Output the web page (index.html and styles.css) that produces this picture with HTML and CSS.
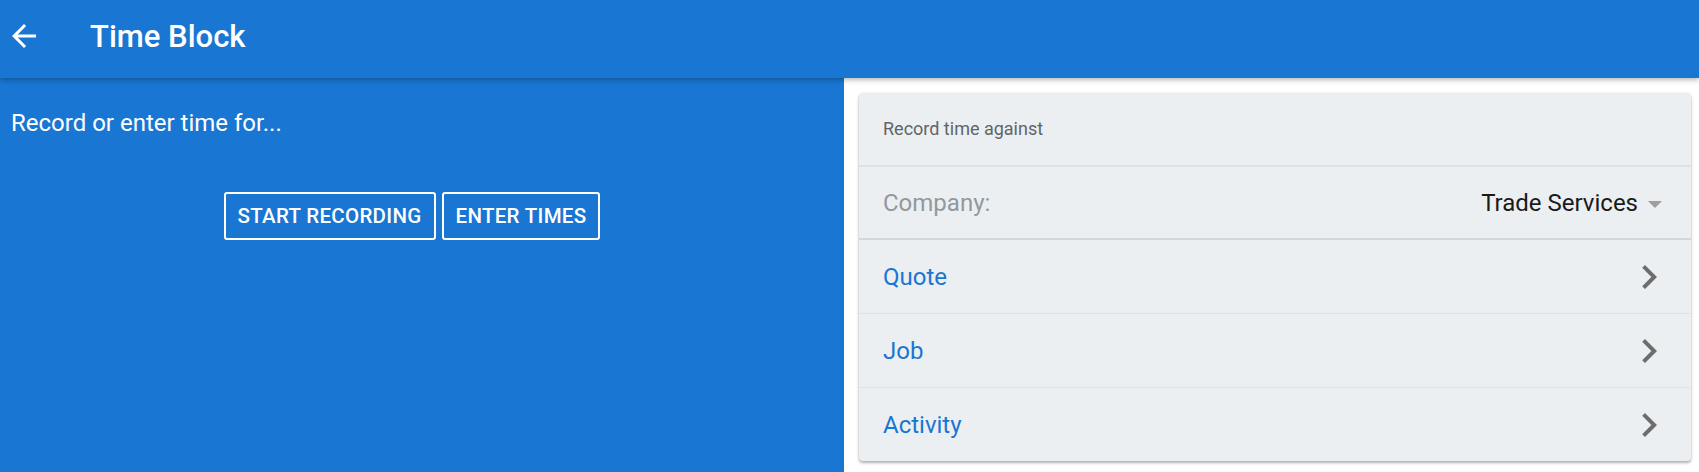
FILE: index.html
```html
<!DOCTYPE html>
<html lang="en">
<head>
  <meta charset="UTF-8" />
  <meta name="viewport" content="width=device-width, initial-scale=1.0"/>
  <title>Time Block</title>
  <link rel="stylesheet" href="styles.css">
</head>
<body>

  <header class="app-bar">
    <button class="back-btn" aria-label="Back">
      <svg viewBox="0 0 24 24" width="36" height="36"><path d="M20 11H7.83l5.59-5.59L12 4l-8 8 8 8 1.41-1.41L7.83 13H20v-2z" fill="#fff"/></svg>
    </button>
    <h1 class="title">Time Block</h1>
  </header>

  <main class="layout">
    <section class="left-panel">
      <p class="intro">Record or enter time for...</p>
      <div class="actions">
        <button class="outline-btn">Start Recording</button>
        <button class="outline-btn">Enter Times</button>
      </div>
    </section>

    <section class="right-panel">
      <div class="card">
        <div class="card-head">Record time against</div>

        <div class="row company-row">
          <span class="label">Company:</span>
          <span class="select">
            Trade Services
            <span class="caret"></span>
          </span>
        </div>

        <div class="row link-row">
          <span class="link">Quote</span>
          <svg class="chevron" viewBox="0 0 24 24" width="48" height="48"><path d="M10 6L8.59 7.41 13.17 12l-4.58 4.59L10 18l6-6z"/></svg>
        </div>
        <div class="row link-row">
          <span class="link">Job</span>
          <svg class="chevron" viewBox="0 0 24 24" width="48" height="48"><path d="M10 6L8.59 7.41 13.17 12l-4.58 4.59L10 18l6-6z"/></svg>
        </div>
        <div class="row link-row last">
          <span class="link">Activity</span>
          <svg class="chevron" viewBox="0 0 24 24" width="48" height="48"><path d="M10 6L8.59 7.41 13.17 12l-4.58 4.59L10 18l6-6z"/></svg>
        </div>
      </div>
    </section>
  </main>

</body>
</html>
```

FILE: styles.css
```css
* {
  margin: 0;
  padding: 0;
  box-sizing: border-box;
  font-family: Roboto, 'Liberation Sans', sans-serif;
}

html, body {
  height: 100%;
}

body {
  display: flex;
  flex-direction: column;
  background: #fff;
  overflow: hidden;
}

.app-bar {
  position: relative;
  z-index: 2;
  height: 78px;
  flex: none;
  display: flex;
  align-items: center;
  background: #1976d2;
  color: #fff;
  box-shadow: 0 2px 5px rgba(0, 0, 0, 0.28);
  padding-bottom: 6px;
}

.back-btn {
  width: 36px;
  height: 36px;
  margin-left: 6px;
  background: none;
  border: none;
  display: flex;
}

.title {
  margin-left: 48px;
  font-size: 31px;
  font-weight: 500;
}

.layout {
  flex: 1;
  display: flex;
}

.left-panel {
  width: 844px;
  flex: none;
  background: #1976d2;
  color: #fff;
  padding: 31px 31px 0 11px;
}

.intro {
  font-size: 24px;
  line-height: 28px;
}

.actions {
  display: flex;
  justify-content: center;
  gap: 6px;
  margin-top: 55px;
}

.outline-btn {
  height: 48px;
  padding: 0 12px;
  background: transparent;
  border: 2px solid #fff;
  border-radius: 3px;
  color: #fff;
  font-size: 20.5px;
  font-weight: 500;
  text-transform: uppercase;
  letter-spacing: 0.3px;
}

.right-panel {
  flex: 1;
  padding: 15px 8px 0 15px;
}

.card {
  background: #eceff1;
  border-radius: 4px;
  box-shadow: 0 2px 3px rgba(0, 0, 0, 0.3), 0 0 2px rgba(0, 0, 0, 0.08);
  overflow: hidden;
}

.card-head {
  height: 74px;
  display: flex;
  align-items: center;
  padding: 0 24px 1px;
  font-size: 18px;
  color: #5f6569;
  border-bottom: 2px solid #dde2e5;
}

.row {
  height: 74px;
  display: flex;
  align-items: center;
  justify-content: space-between;
  padding: 1px 24px 0;
  font-size: 24px;
}

.company-row {
  height: 73px;
  border-bottom: 2px solid #d2d7da;
  padding-right: 29px;
}

.label {
  color: #90999e;
}

.select {
  display: flex;
  align-items: center;
  gap: 10px;
  color: #1a1a1a;
}

.caret {
  width: 0;
  height: 0;
  border-left: 7.5px solid transparent;
  border-right: 7.5px solid transparent;
  border-top: 7px solid #9e9e9e;
  margin-top: 2px;
}

.link-row {
  border-bottom: 1px solid #dde2e5;
  padding-right: 18px;
}

.link-row.last {
  border-bottom: none;
  height: 73px;
}

.link {
  color: #1976d2;
}

.chevron {
  fill: #6d6d6d;
}
```
